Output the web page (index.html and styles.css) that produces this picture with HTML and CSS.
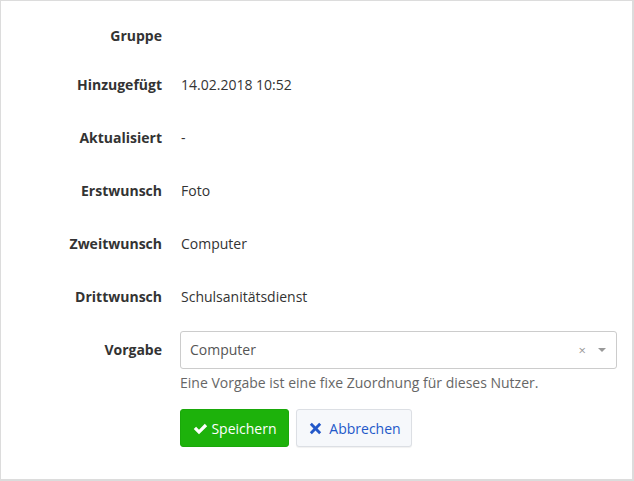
FILE: index.html
```html
<!DOCTYPE html>
<html lang="de">
<head>
    <meta charset="UTF-8">
    <meta name="viewport" content="width=device-width, initial-scale=1.0">
    <title>Wunsch bearbeiten</title>
    <link rel="stylesheet" href="styles.css">
</head>
<body>

    <div class="panel">
        <form class="form-horizontal">
            <div class="form-group group-empty">
                <label class="control-label">Gruppe</label>
                <div class="form-value"></div>
            </div>
            <div class="form-group">
                <label class="control-label">Hinzugefügt</label>
                <div class="form-value">14.02.2018 10:52</div>
            </div>
            <div class="form-group">
                <label class="control-label">Aktualisiert</label>
                <div class="form-value">-</div>
            </div>
            <div class="form-group">
                <label class="control-label">Erstwunsch</label>
                <div class="form-value">Foto</div>
            </div>
            <div class="form-group">
                <label class="control-label">Zweitwunsch</label>
                <div class="form-value">Computer</div>
            </div>
            <div class="form-group">
                <label class="control-label">Drittwunsch</label>
                <div class="form-value">Schulsanitätsdienst</div>
            </div>

            <!-- Vorgabe -->
            <div class="form-group group-select">
                <label class="control-label label-select">Vorgabe</label>
                <div class="form-field">
                    <div class="select-box">
                        <span class="select-text">Computer</span>
                        <span class="select-clear">×</span>
                        <span class="select-arrow"></span>
                    </div>
                    <p class="help-text">Eine Vorgabe ist eine fixe Zuordnung für dieses Nutzer.</p>
                    <div class="actions">
                        <button type="button" class="btn btn-save">
                            <svg class="icon" width="15" height="15" viewBox="0 0 16 16"><path d="M0.8 8.6l2.5-2.5 3.1 3.1L12.6 3l2.5 2.5-8.7 8.7z" fill="currentColor"/></svg>Speichern
                        </button>
                        <button type="button" class="btn btn-cancel">
                            <svg class="icon" width="13" height="13" viewBox="0 0 16 16"><path d="M3.5 1l4.5 4.5L12.5 1 15 3.5 10.5 8 15 12.5 12.5 15 8 10.5 3.5 15 1 12.5 5.5 8 1 3.5z" fill="currentColor"/></svg>Abbrechen
                        </button>
                    </div>
                </div>
            </div>
        </form>
    </div>

</body>
</html>
```

FILE: styles.css
```css
/* Basic reset */
* {
    margin: 0;
    padding: 0;
    box-sizing: border-box;
}

body {
    font-family: "Open Sans", Arial, sans-serif;
    font-size: 14px;
    line-height: 22px;
    color: #333;
    background-color: #fff;
}

/* Panel */
.panel {
    width: 634px;
    height: 481px;
    border: 1px solid #dcdcdc;
    border-right-width: 2px;
    border-bottom-width: 2px;
    padding: 17px 15px 0 0;
}

.form-group {
    display: flex;
    margin-bottom: 15px;
}

.control-label {
    width: 161px;
    flex-shrink: 0;
    text-align: right;
    font-weight: bold;
    padding-top: 8px;
    padding-bottom: 3px;
}

.group-empty .control-label {
    padding-top: 7px;
    padding-bottom: 4px;
}

.form-value {
    padding: 8px 0;
    margin-left: 19px;
    min-height: 38px;
}

.group-empty .form-value {
    min-height: 0;
    padding: 0;
}

/* Select */
.group-select {
    margin-top: 1px;
}

.label-select {
    padding-top: 8px;
}

.form-field {
    flex: 1;
    margin-left: 18px;
}

.select-box {
    display: flex;
    align-items: center;
    height: 38px;
    border: 1px solid #ccc;
    border-radius: 3px;
    padding: 0 10px 0 9px;
    color: #555;
}

.select-text {
    flex: 1;
}

.select-clear {
    color: #999;
    font-size: 13px;
    margin-right: 12px;
}

.select-arrow {
    width: 0;
    height: 0;
    border-left: 4px solid transparent;
    border-right: 4px solid transparent;
    border-top: 4px solid #999;
}

.help-text {
    margin-top: 3px;
    color: #666;
}

/* Buttons */
.actions {
    display: flex;
    gap: 7px;
    margin-top: 15px;
}

.btn {
    display: flex;
    align-items: center;
    justify-content: center;
    height: 38px;
    font-family: inherit;
    font-size: 14px;
    border-radius: 3px;
    cursor: pointer;
}

.btn-save {
    width: 109px;
    background-color: #1db20b;
    border: 1px solid #1aa80a;
    color: #fff;
    padding: 0 0 0 1px;
}

.btn-save .icon {
    margin-right: 3px;
}

.btn-cancel {
    width: 116px;
    background-color: #f6f8fb;
    border: 1px solid #dcdfe4;
    box-shadow: 0 1px 1px rgba(0, 0, 0, 0.06);
    color: #2358c9;
    padding: 0 0 0 2px;
}

.btn-cancel .icon {
    margin-right: 7px;
}
```
